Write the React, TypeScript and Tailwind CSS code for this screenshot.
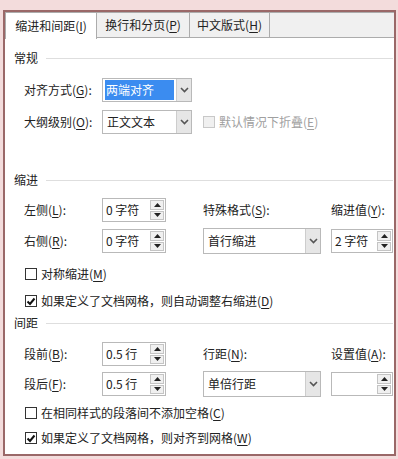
import React from 'react';

const font = { fontFamily: '"Noto Sans CJK SC", "Noto Sans", sans-serif' };

function K({ c }: { c: string }) {
  return (
    <span>
      (<u className="underline-offset-2">{c}</u>)
    </span>
  );
}

function Header({ children }: { children: React.ReactNode }) {
  return (
    <div className="flex items-center h-[16px] pl-[9px]">
      <span className="shrink-0">{children}</span>
      <div className="flex-1 h-px bg-[#dedede] ml-[8px]" />
    </div>
  );
}

function Chevron() {
  return (
    <svg width="9" height="6" viewBox="0 0 9 6">
      <path d="M1 1 L4.5 4.5 L8 1" fill="none" stroke="#555" strokeWidth="1.6" />
    </svg>
  );
}

function Select({ value, w, h = 24, sel = false }: { value: string; w: string; h?: number; sel?: boolean }) {
  return (
    <div className={`flex border border-[#b9b9b9] bg-white ${w}`} style={{ height: h }}>
      <div className="flex-1 flex items-center px-[2px]">
        {sel ? (
          <span className="bg-[#3b8cf0] text-white w-full h-[20px] flex items-center pl-[1px]">{value}</span>
        ) : (
          <span className="pl-[2px]">{value}</span>
        )}
      </div>
      <div className="w-[15px] bg-[#e6e6e6] border-l border-[#cdcdcd] flex items-center justify-center">
        <Chevron />
      </div>
    </div>
  );
}

function Tri({ up }: { up: boolean }) {
  return (
    <svg width="7" height="4" viewBox="0 0 7 4">
      <path d={up ? 'M0 4 L3.5 0 L7 4 Z' : 'M0 0 L3.5 4 L7 0 Z'} fill="#222" />
    </svg>
  );
}

function Spin({ value, w }: { value: string; w: string }) {
  return (
    <div className={`flex h-[24px] border border-[#b9b9b9] bg-white ${w}`}>
      <div className="flex-1 flex items-center pl-[3px]">{value}</div>
      <div className="w-[16px] flex flex-col gap-px p-px">
        <div className="flex-1 bg-[#f0f0f0] border border-[#c4c4c4] flex items-center justify-center">
          <Tri up />
        </div>
        <div className="flex-1 bg-[#f0f0f0] border border-[#c4c4c4] flex items-center justify-center">
          <Tri up={false} />
        </div>
      </div>
    </div>
  );
}

function Check({ checked = false, disabled = false, children }: { checked?: boolean; disabled?: boolean; children: React.ReactNode }) {
  return (
    <div className={`flex items-center h-[16px] ${disabled ? 'text-[#a0a0a0]' : ''}`}>
      <div
        className={`w-[12px] h-[12px] border flex items-center justify-center ${
          disabled ? 'border-[#c8c8c8] bg-[#f0f0f0]' : 'border-[#333] bg-white'
        }`}
      >
        {checked && (
          <svg width="10" height="9" viewBox="0 0 10 9">
            <path d="M1.5 4.5 L4 7 L8.5 1.5" fill="none" stroke="#111" strokeWidth="2" />
          </svg>
        )}
      </div>
      <span className="ml-[4px]">{children}</span>
    </div>
  );
}

export default function App() {
  return (
    <div className="w-[398px] h-[459px] bg-[#f3dcdc] pt-[10px] pl-[3px] pr-[2px] pb-[3px] text-[12px] leading-none text-[#222]" style={font}>
      <div className="h-full border-2 border-[#9a6868] flex flex-col bg-white">
        <div className="h-[26px] flex bg-[#f0f0f0] border-b border-[#acacac] shrink-0">
          <div className="w-[92px] h-[27px] bg-white border border-b-0 border-[#acacac] flex items-center justify-center relative">
            缩进和间距<K c="I" />
          </div>
          <div className="w-[93px] border-r border-t border-[#acacac] flex items-center justify-center">
            换行和分页<K c="P" />
          </div>
          <div className="w-[80px] border-r border-t border-[#acacac] flex items-center justify-center">
            中文版式<K c="H" />
          </div>
          <div className="flex-1 border-t border-[#acacac]" />
        </div>

        <div className="flex-1 flex flex-col pr-[1px]">
          <div className="h-[12px]" />
          <Header>常规</Header>
          <div className="h-[12px]" />
          <div className="flex items-center h-[24px]">
            <span className="w-[97px] pl-[19px]">对齐方式<K c="G" />:</span>
            <Select value="两端对齐" w="w-[90px]" sel />
          </div>
          <div className="h-[8px]" />
          <div className="flex items-center h-[24px]">
            <span className="w-[97px] pl-[19px]">大纲级别<K c="O" />:</span>
            <Select value="正文文本" w="w-[90px]" />
            <div className="ml-[11px]">
              <Check disabled>默认情况下折叠<K c="E" /></Check>
            </div>
          </div>

          <div className="h-[38px]" />
          <Header>缩进</Header>
          <div className="h-[10px]" />
          <div className="flex items-center h-[24px]">
            <span className="w-[97px] pl-[19px]">左侧<K c="L" />:</span>
            <Spin value="0 字符" w="w-[64px]" />
            <span className="w-[165px] pl-[37px]">特殊格式<K c="S" />:</span>
            <span>缩进值<K c="Y" />:</span>
          </div>
          <div className="h-[6px]" />
          <div className="flex items-center h-[26px]">
            <span className="w-[97px] pl-[19px]">右侧<K c="R" />:</span>
            <Spin value="0 字符" w="w-[64px]" />
            <div className="ml-[37px]">
              <Select value="首行缩进" w="w-[118px]" h={26} />
            </div>
            <div className="ml-[10px]">
              <Spin value="2 字符" w="w-[62px]" />
            </div>
          </div>
          <div className="h-[12px]" />
          <div className="pl-[20px]">
            <Check>对称缩进<K c="M" /></Check>
          </div>
          <div className="h-[11px]" />
          <div className="pl-[20px]">
            <Check checked>如果定义了文档网格，则自动调整右缩进<K c="D" /></Check>
          </div>

          <div className="h-[6px]" />
          <Header>间距</Header>
          <div className="h-[11px]" />
          <div className="flex items-center h-[24px]">
            <span className="w-[97px] pl-[19px]">段前<K c="B" />:</span>
            <Spin value="0.5 行" w="w-[64px]" />
            <span className="w-[165px] pl-[37px]">行距<K c="N" />:</span>
            <span>设置值<K c="A" />:</span>
          </div>
          <div className="h-[5px]" />
          <div className="flex items-center h-[26px]">
            <span className="w-[97px] pl-[19px]">段后<K c="F" />:</span>
            <Spin value="0.5 行" w="w-[64px]" />
            <div className="ml-[37px]">
              <Select value="单倍行距" w="w-[118px]" h={26} />
            </div>
            <div className="ml-[10px]">
              <Spin value="" w="w-[62px]" />
            </div>
          </div>
          <div className="h-[8px]" />
          <div className="pl-[20px]">
            <Check>在相同样式的段落间不添加空格<K c="C" /></Check>
          </div>
          <div className="h-[9px]" />
          <div className="pl-[20px]">
            <Check checked>如果定义了文档网格，则对齐到网格<K c="W" /></Check>
          </div>
        </div>
      </div>
    </div>
  );
}
